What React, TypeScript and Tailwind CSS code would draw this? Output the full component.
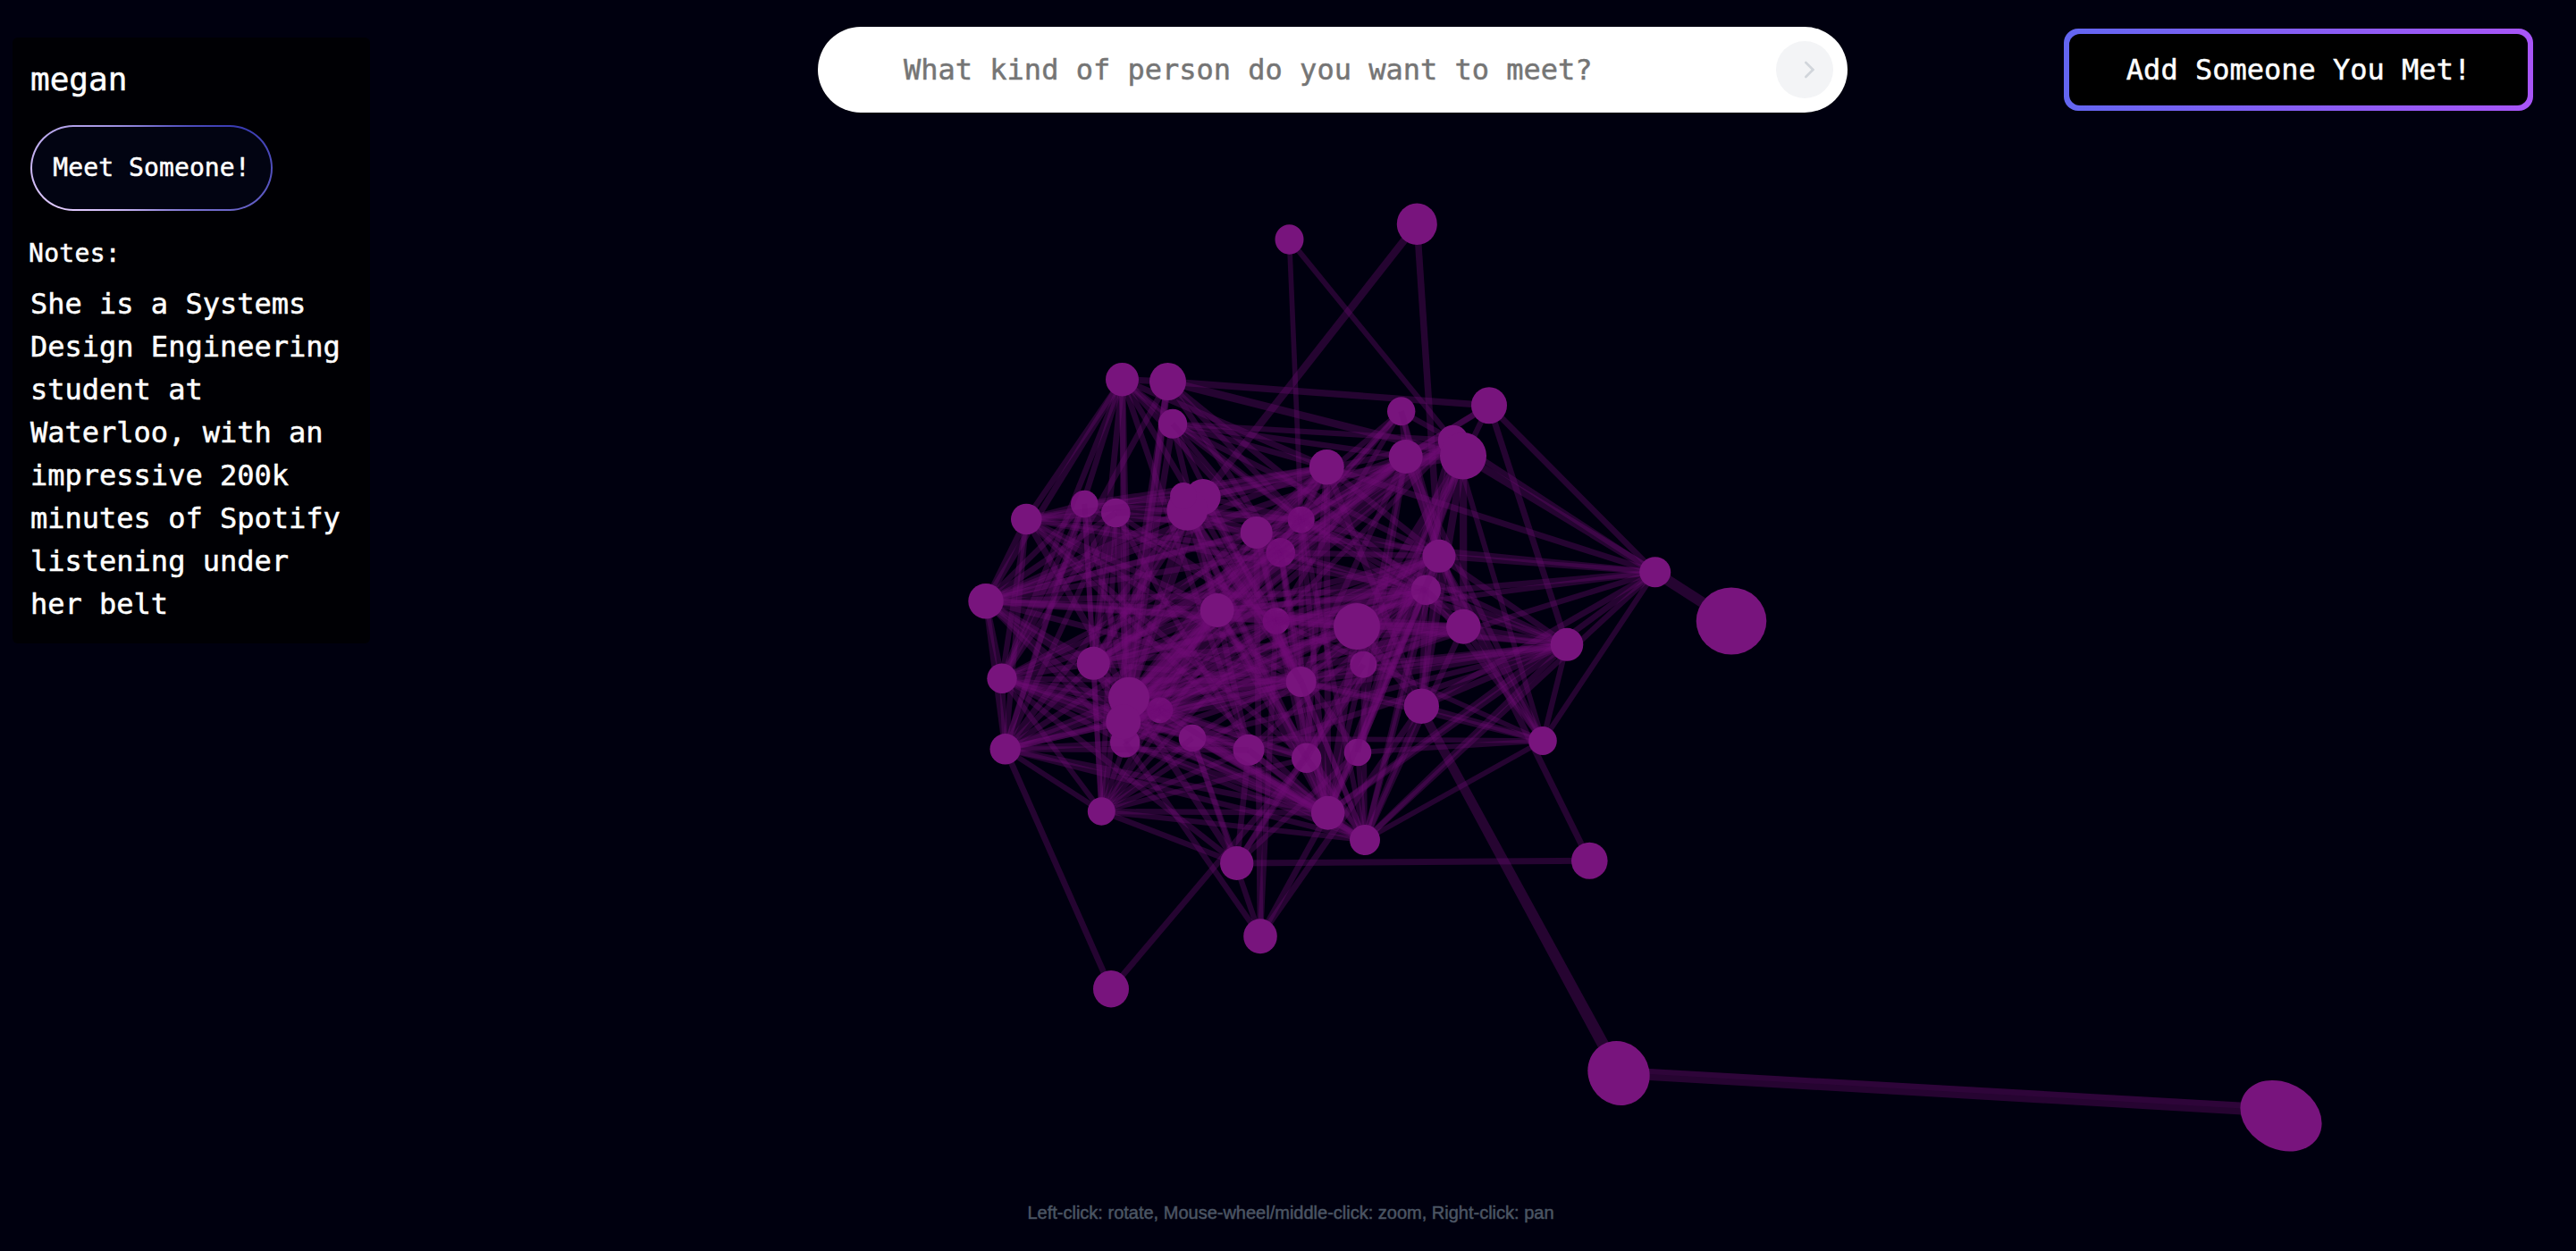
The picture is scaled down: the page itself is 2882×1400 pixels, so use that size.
import React from "react";

type Node = [id: string, x: number, y: number, rx: number, ry: number];

const deepNodes: Node[] = [
  ["K", 1455.7, 581.7, 15, 15],
  ["L", 1432.7, 618.3, 16.3, 16.3],
  ["a", 1297.7, 794.7, 14.5, 14.5],
  ["c", 1427.7, 695, 15, 15],
];

const midNodes: Node[] = [
  ["D", 1312, 474.3, 16.2, 16.5],
  ["F", 1213.3, 564, 15.3, 15.3],
  ["G", 1248.3, 574, 16.3, 16.3],
  ["N", 1567.7, 460.3, 15.7, 16],
  ["Z", 1258.7, 831, 16.7, 16.7],
  ["d", 1455.7, 763, 17, 17],
  ["e", 1334, 826, 15.3, 15.3],
  ["f", 1397, 839.3, 17.5, 17.5],
  ["g", 1461.7, 848.3, 16.7, 16.7],
  ["j", 1595.3, 660.3, 16.7, 16.7],
  ["l", 1525.3, 743.7, 15, 15],
  ["q", 1519, 842, 15.3, 15.3],
];

const frontNodes: Node[] = [
  ["A", 1442.5, 268, 16, 16.7],
  ["B", 1255.5, 424.7, 18.5, 18.8],
  ["C", 1306.5, 427, 20.5, 21],
  ["E", 1148.3, 581, 17.3, 17.3],
  ["H", 1346, 556, 19.7, 20],
  ["I", 1328.3, 570.7, 23, 23],
  ["1", 1324, 555, 15, 15],
  ["J", 1405.7, 596, 18, 18],
  ["M", 1585.3, 250.7, 22.5, 23.3],
  ["O", 1666, 453.7, 20, 20.5],
  ["P", 1572.7, 511, 19, 19],
  ["Q", 1625.7, 492.7, 17, 17],
  ["R", 1637, 510.3, 26, 26.3],
  ["S", 1484.3, 522.7, 19.5, 19.7],
  ["T", 1103, 672.7, 19.7, 19.7],
  ["U", 1121, 759.3, 16.7, 16.7],
  ["V", 1124.7, 838.3, 17.2, 17.2],
  ["W", 1223.3, 742.3, 18.5, 18.5],
  ["X", 1263, 780.7, 23, 23],
  ["Y", 1256.7, 807.7, 19.5, 19.5],
  ["b", 1361.7, 683, 19, 19],
  ["h", 1232.3, 908, 15.5, 15.7],
  ["i", 1610, 622.3, 18.5, 18.5],
  ["k", 1518, 701, 26, 26],
  ["m", 1637.3, 701.3, 19.3, 19.5],
  ["n", 1590.3, 790.3, 19.7, 19.7],
  ["o", 1753, 721.3, 18.3, 18.5],
  ["p", 1726, 829, 15.8, 16],
  ["r", 1485.7, 909.7, 18.8, 19],
  ["s", 1527, 940, 17, 17],
  ["t", 1851.7, 640.3, 17.5, 17],
  ["u", 1937, 695, 39.3, 37.5],
  ["v", 1778.3, 963.3, 20.3, 20.5],
  ["w", 1383.7, 966, 18.7, 19],
  ["x", 1410, 1047.7, 18.8, 19.5],
  ["y", 1243, 1106.7, 20, 20.7],
];

const position: Record<string, { x: number; y: number; r: number }> = {};
[...deepNodes, ...midNodes, ...frontNodes].forEach(([id, x, y, r]) => {
  position[id] = { x, y, r };
});

// Each entry: a node id followed by the ids of the nodes it is linked to.
const adjacency: [string, string][] = [
  ["A", "KQ"],
  ["M", "i"],
  ["B", "CETUVWZXfdKLSD"],
  ["C", "ORUXYhKLj"],
  ["D", "QPSKLdiXb"],
  ["E", "THSFGKLbdgrUVXj"],
  ["F", "TUVWhHSXKc"],
  ["G", "TUVWhXIJcf"],
  ["H", "SKXWcdRQ"],
  ["I", "KLJTWXVbdgqr"],
  ["J", "SNPXhTcrxt"],
  ["K", "SPQNiXYWTmdjUrsoO"],
  ["L", "SPNQioTUXWYhdgrj"],
  ["N", "PQibcm"],
  ["O", "toPl"],
  ["P", "QRbWYdlqimXp"],
  ["Q", "tcXYjqpb"],
  ["R", "mnkqrg"],
  ["S", "tXYWnirg"],
  ["T", "UWXYZVbcSPdkj"],
  ["U", "WXYZabdVwrfhLe"],
  ["V", "XYWabdZfrhsyk"],
  ["W", "XbcdijmhYPQ"],
  ["X", "YabcdgfrijmoswQ"],
  ["Y", "abcdfgrijoms"],
  ["Z", "abdhrsxj"],
  ["a", "bcdrsijgk"],
  ["b", "toijmrsgf"],
  ["c", "togmjirspxh"],
  ["d", "tojirspnh"],
  ["e", "xwhrsopj"],
  ["f", "rwohjs"],
  ["g", "yjiwhrs"],
  ["h", "rswd"],
  ["i", "tprvqosn"],
  ["j", "mopqrsn"],
  ["k", "mr"],
  ["l", "rsowm"],
  ["m", "pos"],
  ["n", "topxs"],
  ["o", "prs"],
  ["p", "ts"],
  ["q", "rsp"],
  ["r", "tx"],
  ["s", "t"],
  ["w", "vqU"],
];

const links = Array.from(
  new Set(adjacency.flatMap(([from, to]) => to.split("").map((t) => [from, t].sort().join("")))),
);
const nearLinks = links.filter((_, i) => i % 6 === 0);
const farLinks = links.filter((_, i) => i % 6 !== 0);

function Links({ items, width }: { items: string[]; width?: number }) {
  return (
    <g stroke="#6f0d75" strokeOpacity={0.33}>
      {items.map((pair) => {
        const a = position[pair[0]];
        const b = position[pair[1]];
        return (
          <line key={pair} x1={a.x} y1={a.y} x2={b.x} y2={b.y} strokeWidth={width ?? (a.r + b.r) * 0.183} />
        );
      })}
    </g>
  );
}

function Nodes({ items }: { items: Node[] }) {
  return (
    <g fill="#78147d">
      {items.map(([id, x, y, rx, ry]) => (
        <ellipse key={id} cx={x} cy={y} rx={rx} ry={ry} />
      ))}
    </g>
  );
}

function Network() {
  return (
    <svg className="absolute inset-0 h-[1400px] w-[2882px]" viewBox="0 0 2882 1400" aria-hidden="true">
      <Nodes items={deepNodes} />
      <Links items={farLinks} />
      <Nodes items={midNodes} />
      <Links items={nearLinks} />
      <Links items={["HM", "kn", "Rt"]} width={8.5} />
      <Links items={["tu"]} width={12} />
      <g fill="#6f0d75" fillOpacity={0.34}>
        <path d="M1583 791 L1592 787 L1817 1198 L1805 1204 Z" />
        <path d="M1811 1194 L2552 1236 L2552 1250 L1811 1207 Z" />
        <path d="M1811 1194 L2552 1236 L2552 1243 L1811 1200 Z" fillOpacity={0.12} />
      </g>
      <Nodes items={frontNodes} />
      <g fill="#78147d">
        <ellipse rx="36.8" ry="33.8" transform="translate(1811 1201) rotate(58)" />
        <ellipse rx="47.8" ry="37.1" transform="translate(2552 1248.7) rotate(28.5)" />
      </g>
    </svg>
  );
}

function PersonCard() {
  return (
    <aside className="mt-[42px] ml-[14px] h-[678px] w-[400px] shrink-0 rounded-md bg-[#000004] p-5">
      <h2 className="text-[36px] leading-[54px]">megan</h2>
      <button className="mt-6 block h-24 w-[271px] rounded-full bg-[conic-gradient(from_245deg_at_50%_50%,#E2CBFF_0%,#393BB2_50%,#E2CBFF_100%)] p-[2px]">
        <span className="flex h-full w-full items-center justify-center rounded-full bg-[#020412] text-[28px] tracking-[0.1px] whitespace-nowrap">
          Meet Someone!
        </span>
      </button>
      <h3 className="mt-[27px] -ml-[2px] text-[28px] leading-[42px] tracking-[0.3px]">Notes:</h3>
      <p className="mt-[11px] text-[32px] leading-[48px]">
        She is a Systems Design Engineering student at Waterloo, with an impressive 200k minutes of Spotify listening
        under her belt
      </p>
    </aside>
  );
}

function SearchBar() {
  return (
    <form className="mt-[30px] ml-[501px] flex h-24 w-[1152px] shrink-0 items-center justify-between rounded-full bg-white pr-4 pl-24">
      <span className="text-[32px] text-[#757575]">What kind of person do you want to meet?</span>
      <button type="button" className="flex size-16 items-center justify-center rounded-full bg-[#f3f4f6]">
        <svg
          className="size-8"
          viewBox="0 0 24 24"
          fill="none"
          stroke="#d1d5db"
          strokeWidth="2"
          strokeLinecap="round"
          strokeLinejoin="round"
        >
          <path d="M13 18l6 -6" />
          <path d="M13 6l6 6" />
        </svg>
      </button>
    </form>
  );
}

export default function App() {
  return (
    <div className="relative flex h-[1400px] w-[2882px] flex-col overflow-hidden bg-[#00000f] font-['DejaVu_Sans_Mono',monospace] text-white [-webkit-text-stroke:0.5px]">
      <Network />
      <div className="relative flex flex-1 items-start">
        <PersonCard />
        <SearchBar />
        <button className="mt-8 ml-[242px] h-[92px] w-[525px] shrink-0 rounded-[16px] bg-[linear-gradient(90deg,#6366f1,#a855f7)] p-[6px]">
          <span className="flex h-full w-full items-center justify-center rounded-[12px] bg-black text-[32px] whitespace-nowrap">
            Add Someone You Met!
          </span>
        </button>
      </div>
      <footer className="relative mb-[31px] pl-[6px] text-center font-['Liberation_Sans',sans-serif] text-[20px] leading-6 text-[#4b5563]">
        Left-click: rotate, Mouse-wheel/middle-click: zoom, Right-click: pan
      </footer>
    </div>
  );
}
